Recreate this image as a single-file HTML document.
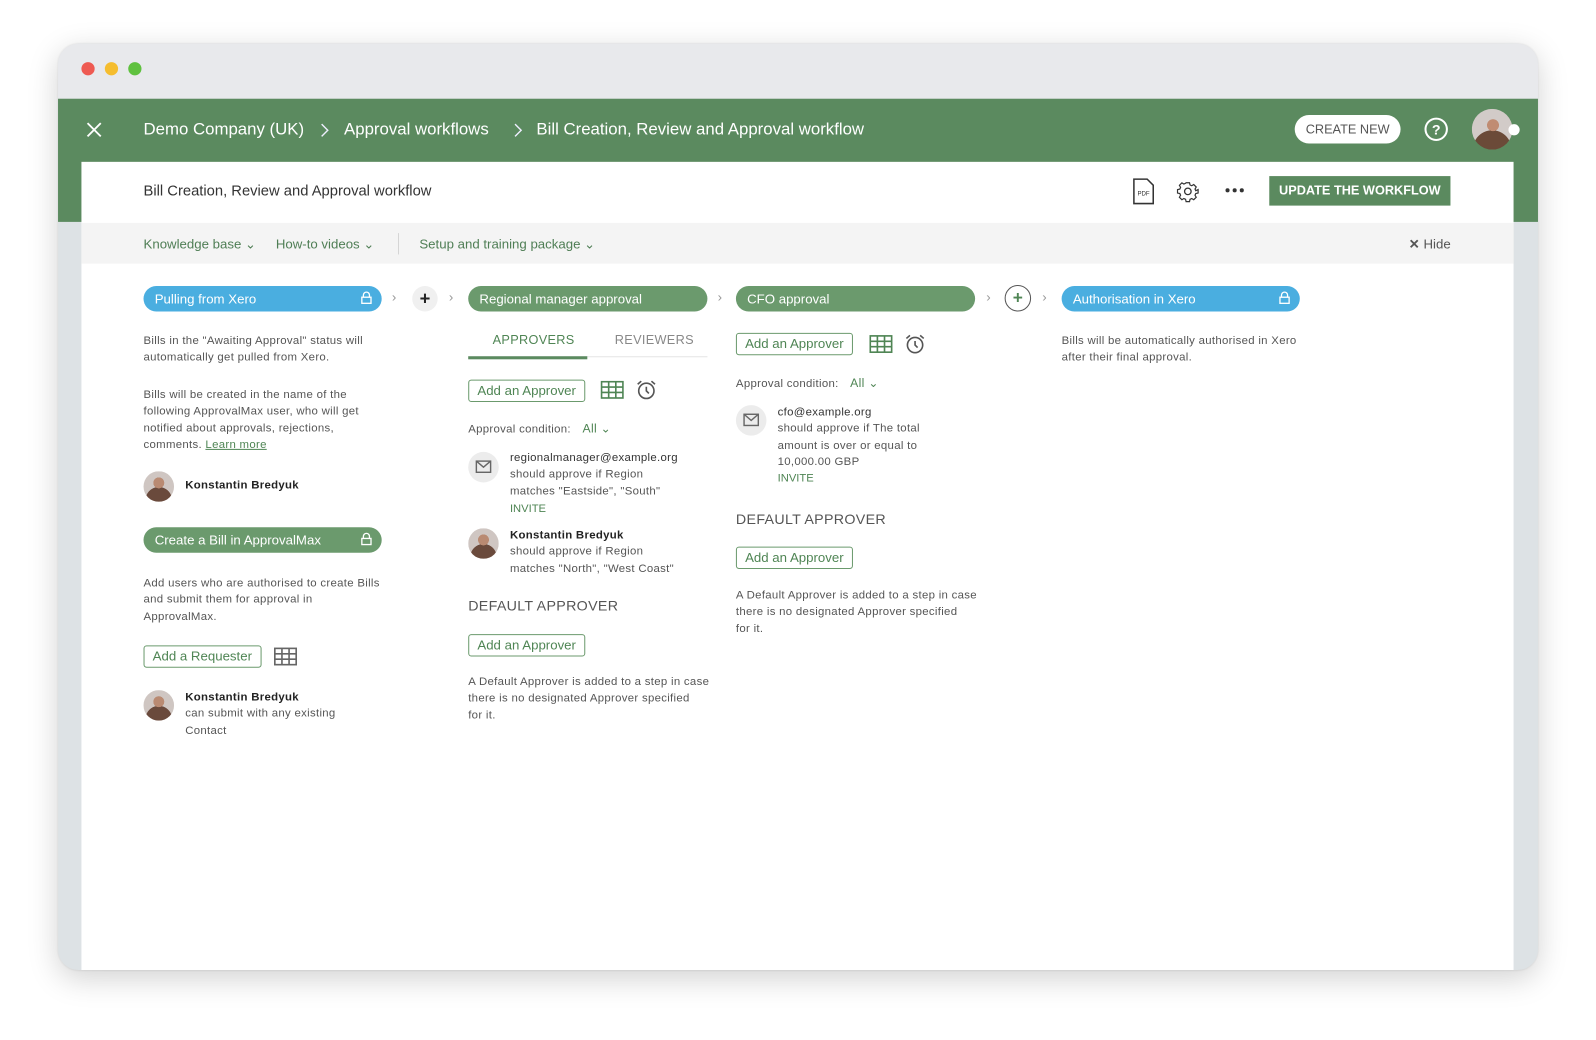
<!DOCTYPE html>
<html><head><meta charset="utf-8">
<style>
*{box-sizing:border-box;margin:0;padding:0}
html,body{width:1596px;height:1040px;overflow:hidden;background:#fff;font-family:"Liberation Sans",sans-serif}
#s{position:absolute;left:0;top:0;width:1568px;height:1022px;transform:scale(1.01786);transform-origin:0 0}
.a{position:absolute;white-space:nowrap}
.win{left:57px;top:43px;width:1454px;height:910px;border-radius:20px;overflow:hidden;background:#dde2e5;box-shadow:0 8px 30px rgba(0,0,0,.18),0 0 2px rgba(0,0,0,.1)}
.t{font-size:11.2px;line-height:16.3px;color:#555;letter-spacing:.3px}
.pill{height:25px;border-radius:13px;color:#fff;font-size:13px;line-height:25px;padding-left:11px}
.blue{background:#4aaee0}.grn{background:#6b9a6d}
.btn{border:1px solid #6b9a6d;border-radius:3px;color:#4f8554;font-size:13px;height:22px;line-height:20px;padding:0 8px;background:#fff}
.chev{color:#999;font-size:13px}
.inv{font-size:11px;color:#4f8554}
.sec{font-size:14px;color:#555;letter-spacing:.3px}
.av{width:30px;height:30px;border-radius:50%;background:radial-gradient(circle at 50% 38%,#b98a72 0 22%,transparent 23%),radial-gradient(circle at 50% 95%,#6a4a3c 0 40%,transparent 41%),#cfc6c2}
.mail{width:30px;height:30px;border-radius:50%;background:#ececec}
.b{font-weight:bold;color:#222}
.lnk{font-size:13px;color:#4f7e55}
</style></head><body><div id="s">
<div class="a win">
 <div class="a" style="left:0;top:0;width:1454px;height:54px;background:#e8e9ec"></div>
 <div class="a" style="left:23px;top:18px;width:13px;height:13px;border-radius:50%;background:#ee5a52"></div>
 <div class="a" style="left:46px;top:18px;width:13px;height:13px;border-radius:50%;background:#f5bd2f"></div>
 <div class="a" style="left:69px;top:18px;width:13px;height:13px;border-radius:50%;background:#5fc13f"></div>
 <div class="a" style="left:0;top:54px;width:1454px;height:121px;background:#5b8a5f"></div>
 <div class="a" style="left:23px;top:116px;width:1407px;height:800px;background:#fff"></div>
</div>
<!-- header -->
<svg class="a" style="left:84px;top:119px" width="17" height="17" viewBox="0 0 17 17"><path d="M2 2L15 15M15 2L2 15" stroke="#fff" stroke-width="1.8"/></svg>
<div class="a" style="left:141px;top:118px;color:#fff;font-size:16.5px">Demo Company (UK)</div>
<svg class="a" style="left:314px;top:120px" width="10" height="16"><path d="M2 2L8 8L2 14" stroke="#eef" stroke-width="1.4" fill="none"/></svg>
<div class="a" style="left:338px;top:118px;color:#fff;font-size:16.5px">Approval workflows</div>
<svg class="a" style="left:504px;top:120px" width="10" height="16"><path d="M2 2L8 8L2 14" stroke="#eef" stroke-width="1.4" fill="none"/></svg>
<div class="a" style="left:527px;top:118px;color:#fff;font-size:16.5px">Bill Creation, Review and Approval workflow</div>
<div class="a" style="left:1272px;top:113px;width:104px;height:28px;border-radius:14px;background:#fff;color:#555;font-size:12.5px;line-height:28px;text-align:center">CREATE NEW</div>
<svg class="a" style="left:1399px;top:115px" width="24" height="24"><circle cx="12" cy="12" r="10.5" stroke="#fff" stroke-width="2" fill="none"/><text x="12" y="17" fill="#fff" font-size="14" font-weight="bold" text-anchor="middle" font-family="Liberation Sans">?</text></svg>
<div class="a" style="left:1446px;top:107px;width:40px;height:40px;border-radius:50%;background:radial-gradient(circle at 52% 40%,#c08c72 0 18%,transparent 19%),radial-gradient(circle at 50% 100%,#6b4a38 0 42%,transparent 43%),#d2cbc8"></div>
<div class="a" style="left:1482px;top:122px;width:11px;height:11px;border-radius:50%;background:#fff"></div>
<div class="a" style="left:141px;top:180px;font-size:14.5px;color:#333">Bill Creation, Review and Approval workflow</div>
<svg class="a" style="left:1113px;top:175px" width="22" height="26"><path d="M1 1H14L20 7V25H1Z" stroke="#333" stroke-width="1.5" fill="none"/><text x="10.5" y="17" font-size="6" fill="#333" text-anchor="middle" font-family="Liberation Sans">PDF</text></svg>
<svg class="a" style="left:1156px;top:177px" width="22" height="22" viewBox="0 0 24 24"><path d="M10 2h4l.6 2.6 2 .9 2.3-1.4 2.9 2.9-1.4 2.3.9 2L24 10v4l-2.7.6-.9 2 1.4 2.3-2.9 2.9-2.3-1.4-2 .9L14 24h-4l-.6-2.7-2-.9-2.3 1.4-2.9-2.9 1.4-2.3-.9-2L0 14v-4l2.7-.6.9-2L2.2 5l2.9-2.9 2.3 1.4 2-.9Z" fill="none" stroke="#333" stroke-width="1.4" transform="scale(.92) translate(1 1)"/><circle cx="12" cy="12" r="3.5" fill="none" stroke="#333" stroke-width="1.4"/></svg>
<svg class="a" style="left:1203px;top:184px" width="20" height="6"><circle cx="3" cy="3" r="2" fill="#333"/><circle cx="10" cy="3" r="2" fill="#333"/><circle cx="17" cy="3" r="2" fill="#333"/></svg>
<div class="a" style="left:1247px;top:173px;width:178px;height:29px;background:#5b8a5f;color:#fff;font-size:12.5px;font-weight:bold;line-height:29px;text-align:center">UPDATE THE WORKFLOW</div>
<!-- toolbar -->
<div class="a" style="left:80px;top:219px;width:1407px;height:40px;background:#f4f4f4"></div>
<div class="a lnk" style="left:141px;top:232px">Knowledge base ⌄</div>
<div class="a lnk" style="left:271px;top:232px">How-to videos ⌄</div>
<div class="a" style="left:391px;top:229px;width:1px;height:21px;background:#d5d5d5"></div>
<div class="a lnk" style="left:412px;top:232px">Setup and training package ⌄</div>
<div class="a" style="left:1384px;top:232px;font-size:13px;color:#555"><b>✕</b> Hide</div>
<!-- pills -->
<div class="a pill blue" style="left:141px;top:281px;width:234px">Pulling from Xero</div>
<svg class="a" style="left:354px;top:286px" width="12" height="13"><path d="M3 6V4a3 3 0 0 1 6 0V6" stroke="#fff" fill="none" stroke-width="1.3"/><rect x="1.5" y="6" width="9" height="6" stroke="#fff" fill="none" stroke-width="1.3"/></svg>
<div class="a chev" style="left:385px;top:284px">›</div>
<div class="a" style="left:405px;top:281px;width:25px;height:25px;border-radius:50%;background:#f0f0f0;text-align:center;line-height:24px;font-size:18px;font-weight:bold;color:#222">+</div>
<div class="a chev" style="left:441px;top:284px">›</div>
<div class="a pill grn" style="left:460px;top:281px;width:235px">Regional manager approval</div>
<div class="a chev" style="left:705px;top:284px">›</div>
<div class="a pill grn" style="left:723px;top:281px;width:235px">CFO approval</div>
<div class="a chev" style="left:969px;top:284px">›</div>
<div class="a" style="left:987px;top:280px;width:26px;height:26px;border-radius:50%;border:1.3px solid #555;text-align:center;line-height:23px;font-size:17px;font-weight:bold;color:#4f8554">+</div>
<div class="a chev" style="left:1024px;top:284px">›</div>
<div class="a pill blue" style="left:1043px;top:281px;width:234px">Authorisation in Xero</div>
<svg class="a" style="left:1256px;top:286px" width="12" height="13"><path d="M3 6V4a3 3 0 0 1 6 0V6" stroke="#fff" fill="none" stroke-width="1.3"/><rect x="1.5" y="6" width="9" height="6" stroke="#fff" fill="none" stroke-width="1.3"/></svg>
<!-- col1 -->
<div class="a t" style="left:141px;top:327px">Bills in the "Awaiting Approval" status will<br>automatically get pulled from Xero.</div>
<div class="a t" style="left:141px;top:380px">Bills will be created in the name of the<br>following ApprovalMax user, who will get<br>notified about approvals, rejections,<br>comments. <span style="color:#4f8554;text-decoration:underline">Learn more</span></div>
<div class="a av" style="left:141px;top:463px"></div>
<div class="a t b" style="left:182px;top:469px">Konstantin Bredyuk</div>
<div class="a pill grn" style="left:141px;top:518px;width:234px">Create a Bill in ApprovalMax</div>
<svg class="a" style="left:354px;top:523px" width="12" height="13"><path d="M3 6V4a3 3 0 0 1 6 0V6" stroke="#fff" fill="none" stroke-width="1.3"/><rect x="1.5" y="6" width="9" height="6" stroke="#fff" fill="none" stroke-width="1.3"/></svg>
<div class="a t" style="left:141px;top:565px">Add users who are authorised to create Bills<br>and submit them for approval in<br>ApprovalMax.</div>
<div class="a btn" style="left:141px;top:634px">Add a Requester</div>
<svg class="a" style="left:269px;top:636px" width="23" height="18"><rect x="1" y="1" width="21" height="16" fill="none" stroke="#666" stroke-width="1.6"/><path d="M1 6.3H22M1 11.6H22M8 1V17M15 1V17" stroke="#666" stroke-width="1.6"/></svg>
<div class="a av" style="left:141px;top:678px"></div>
<div class="a t" style="left:182px;top:677px"><span class="b">Konstantin Bredyuk</span><br>can submit with any existing<br>Contact</div>
<!-- col2 -->
<div class="a" style="left:484px;top:327px;font-size:12.5px;color:#4f8554;letter-spacing:.3px">APPROVERS</div>
<div class="a" style="left:604px;top:327px;font-size:12.5px;color:#888;letter-spacing:.3px">REVIEWERS</div>
<div class="a" style="left:460px;top:350px;width:235px;height:1px;background:#e4e4e4"></div>
<div class="a" style="left:460px;top:350px;width:117px;height:3px;background:#5b8a5f"></div>
<div class="a btn" style="left:460px;top:373px">Add an Approver</div>
<svg class="a" style="left:590px;top:374px" width="23" height="18"><rect x="1" y="1" width="21" height="16" fill="none" stroke="#4f8554" stroke-width="1.6"/><path d="M1 6.3H22M1 11.6H22M8 1V17M15 1V17" stroke="#4f8554" stroke-width="1.6"/></svg>
<svg class="a" style="left:624px;top:372px" width="22" height="22"><circle cx="11" cy="12" r="7.5" fill="none" stroke="#555" stroke-width="1.6"/><path d="M11 8V12L13.5 14.5M2.5 5.5L6 2.5M19.5 5.5L16 2.5" stroke="#555" stroke-width="1.6" fill="none"/></svg>
<div class="a t" style="left:460px;top:413px">Approval condition: <span style="color:#4f8554;margin-left:8px;font-size:12px">All ⌄</span></div>
<div class="a mail" style="left:460px;top:444px"></div>
<svg class="a" style="left:467px;top:452px" width="16" height="13"><rect x="1" y="1" width="14" height="11" fill="none" stroke="#666" stroke-width="1.4"/><path d="M1 1L8 7L15 1" stroke="#666" stroke-width="1.4" fill="none"/></svg>
<div class="a t" style="left:501px;top:442px"><span style="color:#333">regionalmanager@example.org</span><br>should approve if Region<br>matches "Eastside", "South"</div>
<div class="a inv" style="left:501px;top:494px">INVITE</div>
<div class="a av" style="left:460px;top:519px"></div>
<div class="a t" style="left:501px;top:518px"><span class="b">Konstantin Bredyuk</span><br>should approve if Region<br>matches "North", "West Coast"</div>
<div class="a sec" style="left:460px;top:587px">DEFAULT APPROVER</div>
<div class="a btn" style="left:460px;top:623px">Add an Approver</div>
<div class="a t" style="left:460px;top:662px">A Default Approver is added to a step in case<br>there is no designated Approver specified<br>for it.</div>
<!-- col3 -->
<div class="a btn" style="left:723px;top:327px">Add an Approver</div>
<svg class="a" style="left:854px;top:329px" width="23" height="18"><rect x="1" y="1" width="21" height="16" fill="none" stroke="#4f8554" stroke-width="1.6"/><path d="M1 6.3H22M1 11.6H22M8 1V17M15 1V17" stroke="#4f8554" stroke-width="1.6"/></svg>
<svg class="a" style="left:888px;top:327px" width="22" height="22"><circle cx="11" cy="12" r="7.5" fill="none" stroke="#555" stroke-width="1.6"/><path d="M11 8V12L13.5 14.5M2.5 5.5L6 2.5M19.5 5.5L16 2.5" stroke="#555" stroke-width="1.6" fill="none"/></svg>
<div class="a t" style="left:723px;top:368px">Approval condition: <span style="color:#4f8554;margin-left:8px;font-size:12px">All ⌄</span></div>
<div class="a mail" style="left:723px;top:398px"></div>
<svg class="a" style="left:730px;top:406px" width="16" height="13"><rect x="1" y="1" width="14" height="11" fill="none" stroke="#666" stroke-width="1.4"/><path d="M1 1L8 7L15 1" stroke="#666" stroke-width="1.4" fill="none"/></svg>
<div class="a t" style="left:764px;top:397px"><span style="color:#333">cfo@example.org</span><br>should approve if The total<br>amount is over or equal to<br>10,000.00 GBP</div>
<div class="a inv" style="left:764px;top:464px">INVITE</div>
<div class="a sec" style="left:723px;top:502px">DEFAULT APPROVER</div>
<div class="a btn" style="left:723px;top:537px">Add an Approver</div>
<div class="a t" style="left:723px;top:577px">A Default Approver is added to a step in case<br>there is no designated Approver specified<br>for it.</div>
<!-- col4 -->
<div class="a t" style="left:1043px;top:327px">Bills will be automatically authorised in Xero<br>after their final approval.</div>
</div></body></html>
